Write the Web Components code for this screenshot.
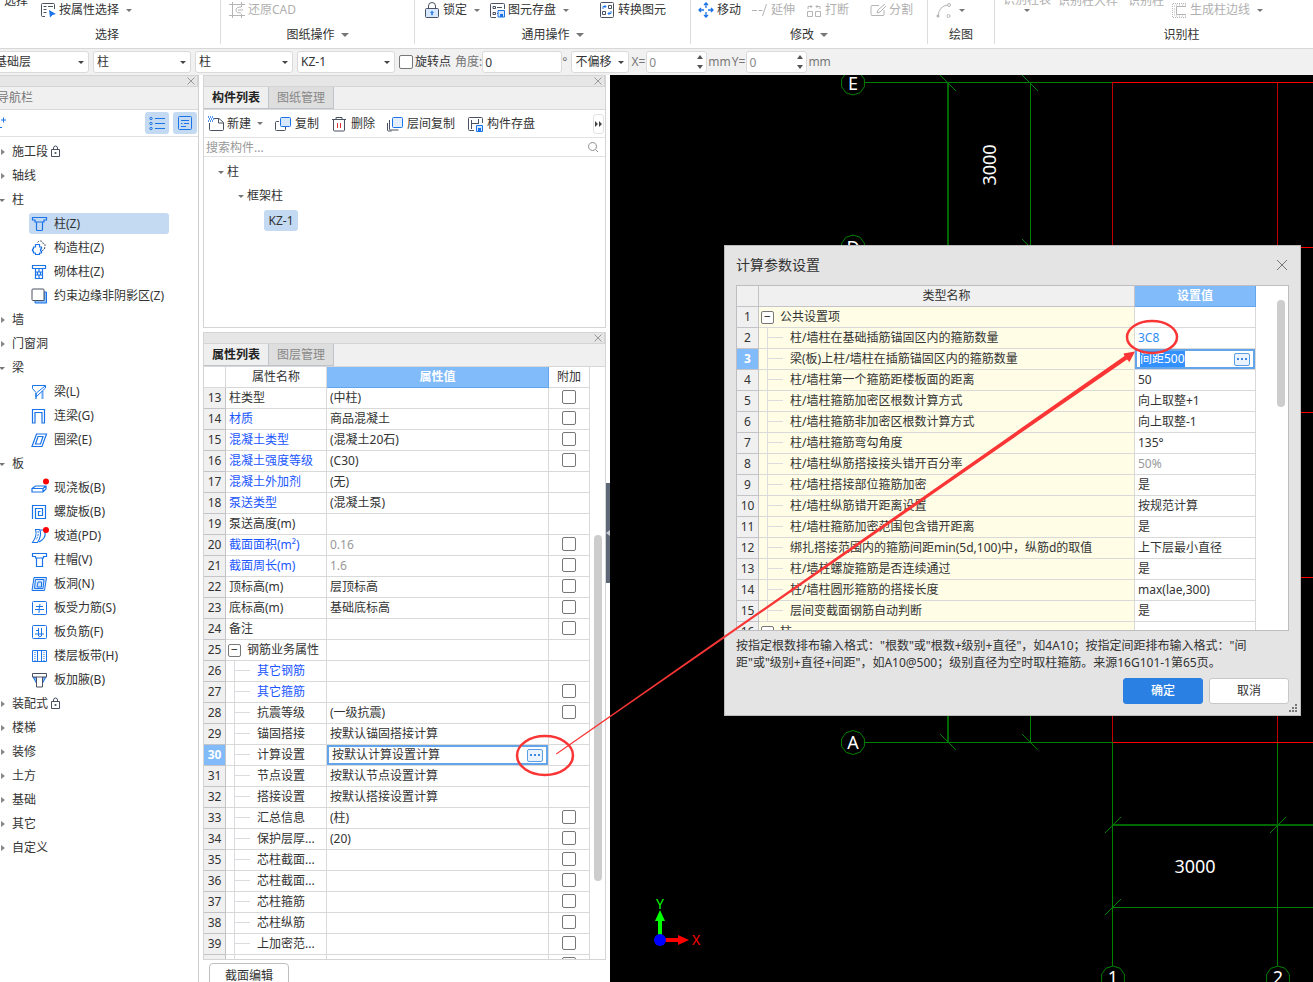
<!DOCTYPE html>
<html lang="zh-CN">
<head>
<meta charset="utf-8">
<title>计算参数设置</title>
<style>
html,body{margin:0;height:100%}
body{font:12px/16px "Noto Sans","Noto Sans CJK SC",sans-serif;color:#333;background:#fff;overflow:hidden}
</style>
</head>
<body>
<cad-app></cad-app>
<script>
const define=(name,render,after)=>customElements.define(name,class extends HTMLElement{
  connectedCallback(){
    if(this.shadowRoot)return;
    this.attachShadow({mode:'open'}).innerHTML='<style>*{box-sizing:border-box}button,input,select{font:inherit;color:inherit;margin:0}button{background:none;border:0;padding:0}</style>'+render(this);
    if(after)after(this);
  }
});

const B='#1a73e8',D='#4a5160',G='#b4b4b4';
const s=(c,d,x='')=>`<path d="${d}" fill="none" stroke="${c}" ${x}/>`;
const ICONS={
  select:s(D,'M5 14.500H2.500a1 1 0 0 1-1-1V2.500a1 1 0 0 1 1-1h11a1 1 0 0 1 1 1V7M3.500 4.500h3M8 4.500h5M3.500 7.500h3M3.500 10.500h3')+`<path d="M9 8l7 4-3.500 1L10 15.500z" fill="${B}"/>`,
  restore:s(G,'M3.500 0v16M12.500 12v4M0 2.500h16M0 13.500h16M12.500 0v5M12 5Q7 5 7 8t5 3M9 8h5'),
  lock:`<rect x="1.500" y="6.500" width="13" height="9" rx="1" fill="#d6e8ff" stroke="${D}"/>`+s(D,'M4.500 6V4a3.500 3.500 0 0 1 7 0v2')+`<path d="M8 9l1.500 1.500H8.500V13h-1v-2.500H6.500z" fill="${B}" stroke="${B}" stroke-width=".5"/>`,
  store:s(D,'M7 15.500H2.500a1 1 0 0 1-1-1V2.500a1 1 0 0 1 1-1h12a1 1 0 0 1 1 1V7M4 4.500h2.500v2H4zM4 10.500h2.500v2H4zM8 5.500h5M8 11.500h1')+`<path d="M9 8.500h6.500v6.500H9z" fill="#d6e8ff" stroke="${B}"/><path d="M11 12h3v3h-3z" fill="${B}"/>`,
  convert:s(D,'M2.500 .500h11a1 1 0 0 1 1 1v13a1 1 0 0 1-1 1h-11a1 1 0 0 1-1-1v-13a1 1 0 0 1 1-1zM9.500 3.500h3v3h-3zM3.500 9.500h3v3h-3z')+s(B,'M4 7V4.500h3M5.500 3L7 4.500 5.500 6M12 9v2.500H9M10.500 10L9 11.500l1.500 1.500'),
  move:s(B,'M8 1v5M8 10v5M1 8h5M10 8h5M6 3l2-2 2 2M6 13l2 2 2-2M3 6L1 8l2 2M13 6l2 2-2 2','stroke-width="1.300"'),
  extend:s(G,'M0 8.500h5M6.500 8.500h4M14.500 2l-4 12'),
  break:s(G,'M1.500 9.500h5v5h-5zM9.500 9.500h5v5h-5zM2 7V4.500h4M4.500 3L6 4.500 4.500 6M14 7V4.500h-4M11.500 3L10 4.500 11.500 6'),
  split:s(G,'M9 3.500H2a1 1 0 0 0-1 1v8a1 1 0 0 0 1 1h11a1 1 0 0 0 1-1V8M15 2L8 8l-1 3 3-1 6-6'),
  arc:s(G,'M2 14Q3 4 12 3')+`<circle cx="2" cy="14" r="1.500" fill="${G}"/><circle cx="13" cy="3" r="1.500" fill="none" stroke="${G}"/><circle cx="12.500" cy="14" r="1.500" fill="none" stroke="${G}"/>`,
  edge:s(G,'M15 1.500H1.500v14H15','stroke-dasharray="1 1"')+s(G,'M15 4.500H5.500v8H15')+s(G,'M15 3H3.500v11H15','stroke-dasharray="1 2"'),
  newdoc:s(D,'M6 2.500h5l4.500 4v7a1 1 0 0 1-1 1h-12a1 1 0 0 1-1-1V7M10.500 2.500V7h5')+s(B,'M0 1h5M1 3h5M0 5h5','stroke-dasharray="1 1" stroke-width="1.500"'),
  copy:s(D,'M4 5.500H1.500a1 1 0 0 0-1 1v7a1 1 0 0 0 1 1h8a1 1 0 0 0 1-1V11')+`<rect x="5.500" y="1.500" width="10" height="9" rx="1" fill="#d6e8ff" stroke="${B}"/>`,
  trash:s(D,'M1 3.500h14M5 3V1.500h6V3M2.500 4v10a1 1 0 0 0 1 1h9a1 1 0 0 0 1-1V4')+s('#e03030','M6.500 7v5M9.500 7v5'),
  layers:s(D,'M2.500 4v9a1 1 0 0 0 1 1h8M.500 7v7a1 1 0 0 0 1 1h3')+`<rect x="5.500" y="1.500" width="10" height="10" rx="1" fill="#e3efff" stroke="${B}"/>`,
  savecomp:s(D,'M7 14.500H2.500a1 1 0 0 1-1-1V2.500a1 1 0 0 1 1-1h12a1 1 0 0 1 1 1V7M4.500 4v9M4.500 7.500h7M11.500 3v5')+`<path d="M9.500 9.500h6v6h-6z" fill="#d6e8ff" stroke="${B}"/><path d="M11 12h3v3h-3z" fill="${B}"/>`,
  search:s('#8c8c8c','M7.500 3.500a4 4 0 1 0 .1 0zM10.500 10.500l2.500 2.500'),
  lockmini:s(D,'M1.500 5.500h8v7h-8zM3.500 5V4a2 2 0 0 1 4 0v1')+`<circle cx="5.500" cy="9" r="1.100" fill="${D}"/>`,
  list:[3,8,13].map(y=>`<circle cx="2" cy="${y+.5}" r="1.200" fill="none" stroke="${B}"/>`).join('')+s(B,'M6 3.500h10M6 8.500h10M6 13.500h10'),
  card:s(B,'M2.500 1.500h11a1 1 0 0 1 1 1v11a1 1 0 0 1-1 1h-11a1 1 0 0 1-1-1v-11a1 1 0 0 1 1-1zM4 5.500h8M4 8.500h1.500M7 8.500h5M4 11.500h5'),
  plus:s(B,'M1 5h5M3.500 2.500v5M0 12.500h2'),
  column:s(B,'M1.500 1.500h14v2.500h-2.500v2h-9v-2h-2.500zM5.500 6.500v7a1 1 0 0 0 1 1h4a1 1 0 0 0 1-1v-7','stroke-width="1.200"'),
  tie:s(D,'M6.500 2.500q1-1.500 3-1.500t2.500 2.500q2.500 0 2 2.500l-.5 3-2.500 2','stroke-dasharray="2 1"')+s(B,'M4.500 4.500h4v2.500h2v2h-1v2h1v2h-2v1.500h-4V13h-2v-2h-1V9h1V7h2z','stroke-width="1.200" stroke-linejoin="round"'),
  masonry:s(B,'M1.500 1.500h13v3h-13zM4.500 4.500v10h7v-10M4.500 8h7M4.500 11h7M8 5v3M6.500 8v3M9.500 8v3M8 11v3','stroke-width="1.200"'),
  shade:`<path d="M13 4h2.500v11H4v-2.500h9z" fill="#8dbdf5" stroke="${B}"/><rect x="1" y="1" width="12" height="11.500" rx="1" fill="#fff" stroke="${D}"/>`,
  beam:`<path d="M5 9v6M11.500 7v8" stroke="#6ca8f2" stroke-width="2"/>`+s(B,'M1.500 1.500h13v2.500L5 13V8.500L1.500 4.500zM14 2L6 8.500'),
  link:s(B,'M1.500 15V1.500h12V15h-2.500V4.500h-7V15z','stroke-width="1.200"'),
  ring:s(B,'M5.500 2h10l-4.500 12.500h-10zM7 4.500h5l-2.500 7.500h-5z','stroke-width="1.200"'),
  slab:s(B,'M1 8.500L4.500 6H15v3l-3 3H1zM1 8.500h11l3-2.500M12 8.500V12','stroke-width="1.200"')+'<circle cx="15" cy="1.500" r="3" fill="#f00"/>',
  spiral:s(B,'M1.500 15V1.500h13v13h-10v-10h7v7h-4v-4h2','stroke-width="1.200"'),
  ramp:s(B,'M4.500 1.500h4q3 5-2 13H1.500q5-7 3-13zM9 2h4q3 6-2 10l-3 2','stroke-width="1.100"')+s(B,'M7 3q1 4-2 9','stroke-dasharray="2 1"')+'<circle cx="15" cy="2" r="3" fill="#f00"/>',
  cap:s(B,'M1.500 1.500h14v3h-3v1.500h-8v-1.500h-3zM5.500 6v8.500h6V6','stroke-width="1.200"'),
  hole:`<path d="M3 1.500h12.500l-2 13H1z" fill="#d6e8ff" stroke="${B}"/>`+s(B,'M4.500 3.500h8.500l-1 9H3.500zM7 6h3.500v5H6z'),
  rebar:s(B,'M2.500 1.500h12a1 1 0 0 1 1 1v11a1 1 0 0 1-1 1h-12a1 1 0 0 1-1-1v-11a1 1 0 0 1 1-1zM5 6.500h7M4 9.500h9M9 4q-1 4-1 9'),
  neg:s(B,'M2.500 1.500h12a1 1 0 0 1 1 1v11a1 1 0 0 1-1 1h-12a1 1 0 0 1-1-1v-11a1 1 0 0 1 1-1zM5 6.500h3M4 10h9M7.500 4v8M10.500 4v8l-3 1'),
  strip:s(B,'M1.500 2.500h14v11h-14zM6.500 3v10M10.500 3v10')+s(B,'M4 4v9M13 4v9','stroke-dasharray="1 1"'),
  haunch:`<path d="M2 5h13l-4 7H6z" fill="#7fb4f5" stroke="${B}"/><path d="M1.500 1.500h14v3.500h-14zM5.500 5v10h6V5" fill="#fff" stroke="${D}"/>`,
};
define('ui-icon',e=>`<style>:host{display:block;flex:none;width:16px;height:16px}svg{display:block}</style><svg width="16" height="16" viewBox="0 0 16 16" overflow="visible" aria-hidden="true">${ICONS[e.getAttribute('name')]||''}</svg>`);

define('ui-caret',e=>`<style>:host{display:block;flex:none;width:0;height:0;border:3px solid transparent;border-top-color:currentColor;border-bottom:0;color:#777}
:host([right]){border:3px solid transparent;border-left:4px solid #888;border-right:0}
:host([big]){border-width:4px 4px 0}</style>`);

/* Ribbon */
define('ribbon-item',e=>`<style>:host{display:block;flex:none}:host([disabled]){color:#b0b0b0}:host([raised]){margin-top:-19px}:host([stack]){margin-top:-16px}
button{display:flex;align-items:center;gap:3px;height:20px;white-space:nowrap}ui-caret{margin-left:4px}
:host([stack]) button{flex-direction:column;gap:0;height:22px;line-height:18px}:host([stack]) ui-caret{margin:0}</style>
<button type="button">${e.getAttribute('icon')?`<ui-icon name="${e.getAttribute('icon')}"></ui-icon>`:''}<slot></slot>${e.hasAttribute('menu')?'<ui-caret></ui-caret>':''}</button>`);

define('ribbon-group',e=>`<style>:host{display:flex;flex-direction:column;flex:none;height:44px;border-right:1px solid #dcdcdc}
.row{display:flex;flex:none;align-items:center;height:20px;padding-left:var(--lead,8px);gap:var(--gap,10px)}
.cap{display:flex;flex:none;align-items:center;justify-content:center;gap:6px;height:30px;padding-right:var(--trail,0)}</style>
<div class="row"><slot></slot></div><div class="cap">${e.getAttribute('label')}${e.hasAttribute('menu')?'<ui-caret big></ui-caret>':''}</div>`);

define('ribbon-bar',()=>`<style>:host{display:flex;flex:none;height:49px;overflow:hidden;background:#fff;border-bottom:1px solid #d8d8d8}
.g1{width:221px;--lead:4px;--gap:12px;--trail:6px}.g2{width:194px;--lead:8px}.g3{width:276px;--lead:9px;--gap:9px}.g4{width:237px;--lead:7px;--gap:11px}.g5{width:67px;--lead:8px}.g6{width:374px;--lead:8px;--gap:7px}
.wide{margin-left:21px}.gap{margin-left:10px}.near{margin-left:3px}</style>
<ribbon-group class="g1" label="选择"><ribbon-item raised>选择</ribbon-item><ribbon-item icon="select" menu>按属性选择</ribbon-item></ribbon-group>
<ribbon-group class="g2" label="图纸操作" menu><ribbon-item icon="restore" disabled>还原CAD</ribbon-item></ribbon-group>
<ribbon-group class="g3" label="通用操作" menu><ribbon-item icon="lock" menu>锁定</ribbon-item><ribbon-item icon="store" menu>图元存盘</ribbon-item><ribbon-item icon="convert" class="wide">转换图元</ribbon-item></ribbon-group>
<ribbon-group class="g4" label="修改" menu><ribbon-item icon="move">移动</ribbon-item><ribbon-item icon="extend" disabled>延伸</ribbon-item><ribbon-item icon="break" disabled>打断</ribbon-item><ribbon-item icon="split" disabled class="gap">分割</ribbon-item></ribbon-group>
<ribbon-group class="g5" label="绘图"><ribbon-item icon="arc" menu disabled></ribbon-item></ribbon-group>
<ribbon-group class="g6" label="识别柱"><ribbon-item stack menu disabled>识别柱表</ribbon-item><ribbon-item raised disabled>识别柱大样</ribbon-item><ribbon-item raised disabled class="near">识别柱</ribbon-item><ribbon-item icon="edge" menu disabled>生成柱边线</ribbon-item></ribbon-group>`);

/* Option bar */
define('drop-down',e=>`<style>:host{display:block;position:relative;flex:none;width:98px;height:22px}
select{appearance:none;width:100%;height:22px;border:1px solid #dadada;border-radius:3px;background:#fff;padding:0 3px;outline:0}
ui-caret{position:absolute;right:5px;top:10px;color:#444;pointer-events:none}</style>
<select aria-label="${e.getAttribute('label')}"><option>${e.getAttribute('value')}</option></select><ui-caret></ui-caret>`);
define('num-box',e=>`<style>:host{display:block;position:relative;flex:none;width:61px;height:22px;color:#888}
input{width:100%;height:22px;border:1px solid #dadada;border-radius:3px;background:#fff;padding:0 2px;outline:0}
svg{position:absolute;right:4px;top:4px}:host([plain]){width:80px;color:#333}:host([plain]) svg{display:none}</style>
<input type="text" aria-label="${e.getAttribute('label')}" value="0"><svg width="6" height="14" fill="#555"><path d="M3 0l3 4H0zM3 14l3-4H0z"/></svg>`);
define('option-bar',()=>`<style>:host{display:flex;flex:none;align-items:center;height:26px;background:#f1f1f1;overflow:hidden;color:#777}
.bar,.set{display:flex;align-items:center;gap:4px}.bar{margin-left:-9px}drop-down{color:#333}.off{width:58px}
label{display:flex;align-items:center;gap:2px;color:#333}input{appearance:none;width:14px;height:14px;border:1px solid #777;border-radius:2px;background:#fff}
.f{gap:0}.tail{gap:1px;margin-left:-2px}</style>
<div class="bar"><drop-down label="楼层" value="基础层"></drop-down><drop-down label="类别" value="柱"></drop-down><drop-down label="类型" value="柱"></drop-down><drop-down label="构件" value="KZ-1"></drop-down>
<label><input type="checkbox">旋转点</label><div class="set f"><span>角度:</span><num-box plain label="角度"></num-box><span>°</span></div>
<drop-down class="off" label="偏移" value="不偏移"></drop-down><div class="set tail"><span>X=</span><num-box label="X"></num-box><span>mm</span><span>Y=</span><num-box label="Y"></num-box><span>mm</span></div></div>`);

/* Dock panel */
define('dock-head',e=>{const t=(e.getAttribute('tabs')||'').split(',').filter(Boolean);return `<style>:host{display:block;flex:none}
.t{display:flex;justify-content:flex-end;align-items:center;height:12px;background:#e6e6e6;border:1px solid #d4d4d4;border-left:0;padding-right:2px}
.t button{display:block;height:8px}svg{display:block}
.h{display:flex;height:23px;background:#f0f0f0;border-bottom:1px solid #d8d8d8;align-items:stretch}
.h button{width:65px;padding-top:1px;border-right:1px solid #bfc3ca;border-bottom:1px solid #bfc3ca;background:#dedede;color:#888}
.h button:first-child{font-weight:600;color:#222;background:#efefef}
.h span{line-height:22px;color:#777;margin-left:-3px}</style>
<div class="t"><button type="button" aria-label="关闭"><svg width="8" height="8"><path d="M.500 .500l7 7M7.500 .500l-7 7" stroke="#999"/></svg></button></div>
<div class="h">${t.length?t.map(x=>`<button type="button">${x}</button>`).join(''):`<span>${e.getAttribute('heading')}</span>`}</div>`});

const NAV=[['施工段',0,'lockmini'],['轴线'],['柱',1],['-柱(Z)','column'],['-构造柱(Z)','tie'],['-砌体柱(Z)','masonry'],['-约束边缘非阴影区(Z)','shade'],['墙'],['门窗洞'],['梁',1],['-梁(L)','beam'],['-连梁(G)','link'],['-圈梁(E)','ring'],['板',1],['-现浇板(B)','slab'],['-螺旋板(B)','spiral'],['-坡道(PD)','ramp'],['-柱帽(V)','cap'],['-板洞(N)','hole'],['-板受力筋(S)','rebar'],['-板负筋(F)','neg'],['-楼层板带(H)','strip'],['-板加腋(B)','haunch'],['装配式',0,'lockmini'],['楼梯'],['装修'],['土方'],['基础'],['其它'],['自定义']];
define('nav-panel',()=>`<style>:host{display:flex;flex-direction:column;flex:none;width:199px;border-right:1px solid #d0d0d0;background:#fff;overflow:hidden}
.tools{display:flex;flex:none;align-items:center;gap:4px;height:27px;border-bottom:1px solid #e0e0e0;padding-right:1px}
.tools>ui-icon{margin-right:auto}
.tools button{display:grid;place-items:center;width:24px;height:22px;border-radius:3px;background:#c3daf2}
ul{display:flex;flex-direction:column;list-style:none;margin:0;padding:3px 0 0}li{display:flex;flex:none;align-items:center;height:24px}
.top ui-caret{margin:0 7px 0 1px}.top.open ui-caret{margin:0 7px 0 -1px}.top ui-icon{margin-left:2px}
.sub{width:140px;height:21px;margin:1px 0 2px 29px;padding-left:2px;gap:7px;border-radius:3px;white-space:nowrap}.on{background:#c3daf2}</style>
<dock-head heading="导航栏"></dock-head><div class="tools"><ui-icon name="plus"></ui-icon><button type="button" aria-label="列表"><ui-icon name="list"></ui-icon></button><button type="button" aria-label="详情"><ui-icon name="card"></ui-icon></button></div>
<ul>${NAV.map(([t,a,b],i)=>t[0]=='-'?`<li class="sub${i==3?' on':''}"><ui-icon name="${a}"></ui-icon><span>${t.slice(1)}</span></li>`:`<li class="top${a?' open':''}"><ui-caret ${a?'':'right'}></ui-caret><span>${t}</span>${b?`<ui-icon name="${b}"></ui-icon>`:''}</li>`).join('')}</ul>`);

define('component-panel',()=>`<style>:host{display:flex;flex-direction:column;flex:none;height:253px;border:1px solid #d4d4d4;border-top:0;background:#fff}
.tools{display:flex;flex:none;align-items:center;gap:12px;height:28px;padding:0 1px 0 4px;border-bottom:1px solid #e2e2e2}
.tools button{display:flex;align-items:center;gap:4px;white-space:nowrap}.tools .n{gap:3px}.n ui-caret{margin-left:3px}.tools .more{margin-left:auto;width:11px;height:20px;border:1px solid #e2e2e2;border-radius:3px;justify-content:center}
.more svg{flex:none}
.find{display:flex;align-items:center;height:19px;border-bottom:1px solid #e2e2e2;padding:0 4px 0 2px}.find input{flex:1;border:0;padding:0;outline:0;height:18px;background:none}::placeholder{color:#999;opacity:1}
ul{list-style:none;margin:0;padding:3px 0 0}li{display:flex;align-items:center;gap:3px;height:24px}
.a{padding-left:14px}.b{padding-left:34px}.c{padding-left:60px}.c span{background:#c3daf2;border-radius:3px;line-height:21px;width:34px;text-align:center}</style>
<dock-head tabs="构件列表,图纸管理"></dock-head>
<div class="tools"><button type="button" class="n"><ui-icon name="newdoc"></ui-icon>新建<ui-caret></ui-caret></button><button type="button"><ui-icon name="copy"></ui-icon>复制</button><button type="button"><ui-icon name="trash"></ui-icon>删除</button><button type="button"><ui-icon name="layers"></ui-icon>层间复制</button><button type="button"><ui-icon name="savecomp"></ui-icon>构件存盘</button><button type="button" class="more" aria-label="更多"><svg width="7" height="6" fill="#444"><path d="M0 0l3 3-3 3zM4 0l3 3-3 3z"/></svg></button></div>
<div class="find"><input type="search" placeholder="搜索构件..." aria-label="搜索构件"><ui-icon name="search"></ui-icon></div>
<ul><li class="a"><ui-caret></ui-caret>柱</li><li class="b"><ui-caret></ui-caret>框架柱</li><li class="c"><span>KZ-1</span></li></ul>`);

/* Grid styles shared by both property tables */
const GRID=`table{border-collapse:separate;border-spacing:0;table-layout:fixed}
th,td{height:21px;padding:0 3px;border-right:1px solid #d9d9d9;border-bottom:1px solid #d9d9d9;line-height:20px;white-space:nowrap;overflow:hidden;text-align:left;font-weight:400}
tbody th{background:#f0f0f0;border-color:#c4c4c8;text-align:center;padding:0}
thead th{text-align:center}thead .v{background:#82bbfa;color:#fff;font-weight:600;border-color:#62a5ea}
tr.on th{background:#82bbfa;color:#fff;font-weight:700}
.in,.grp{position:relative}
.in::before{content:"";position:absolute;left:8px;top:0;bottom:0;border-left:1px solid #dcdce0}.in::after{content:"";position:absolute;left:8px;top:9px;width:16px;border-top:1px solid #dcdce0}
.grp .w{display:flex;align-items:center;height:20px}.box{display:block;width:13px;height:13px;border:1px solid #777;border-radius:2px;background:#fff;line-height:10px;text-align:center}
.edit{padding:0}.edit div{display:flex;align-items:center;height:20px;border:2px solid #62a5ea;background:#fff}.edit input{border:0;padding:0;outline:0;background:none;height:16px}
.edit button{flex:none;display:grid;place-items:center;width:16px;height:13px;margin-left:auto;border:1px solid #5a9fe6;border-radius:2px;background:#eaf3fe}
.thumb{position:absolute;border-radius:4px;background:#cdcdcd;width:8px}`;
const DOTS='<button type="button" aria-label="更多选项"><svg width="10" height="2" fill="#3f8ae0"><path d="M0 0h2v2H0zM4 0h2v2H4zM8 0h2v2H8z"/></svg></button>';
const PROPS=[['柱类型','(中柱)',1],['*材质','商品混凝土',1],['*混凝土类型','(混凝土20石)',1],['*混凝土强度等级','(C30)',1],['*混凝土外加剂','(无)',0],['*泵送类型','(混凝土泵)',0],['泵送高度(m)','',0],['*截面面积(m²)','~0.16',1],['*截面周长(m)','~1.6',1],['顶标高(m)','层顶标高',1],['底标高(m)','基础底标高',1],['备注','',1],['+钢筋业务属性','',0],['*其它钢筋','',0],['*其它箍筋','',1],['抗震等级','(一级抗震)',1],['锚固搭接','按默认锚固搭接计算',0],['计算设置','按默认计算设置计算',0],['节点设置','按默认节点设置计算',0],['搭接设置','按默认搭接设置计算',0],['汇总信息','(柱)',1],['保护层厚...','(20)',1],['芯柱截面...','',1],['芯柱截面...','',1],['芯柱箍筋','',1],['芯柱纵筋','',1],['上加密范...','',1],['','',1]];
define('property-panel',()=>`<style>${GRID}
:host{display:flex;flex-direction:column;flex:1;min-height:0;background:#fff}
.frame{border:1px solid #d4d4d4;border-top:0;display:flex;flex-direction:column;flex:1;min-height:0}
.scroll{position:relative;flex:1;min-height:0;overflow:hidden}table{width:386px}
.blue{color:#1a56ff}.dim{color:#999}td.in{padding-left:31px}td.c{padding:0}td.c input{display:block;appearance:none;width:14px;height:14px;border:1px solid #777;border-radius:2px;margin:0 auto 2px;background:#fff}
thead th{height:21px;padding:0}.grp .box{margin-right:6px;margin-left:-1px}.edit input{width:160px;margin-left:3px}.edit button{margin-right:3px}
.thumb{right:3px;top:168px;height:346px}
.foot{flex:none;height:22px;overflow:hidden;padding:3px 0 0 6px}.foot button{width:80px;height:25px;border:1px solid #bfbfbf;border-radius:4px;background:#fff}</style>
<div class="frame"><dock-head tabs="属性列表,图层管理"></dock-head><div class="scroll"><table><colgroup><col style="width:22px"><col style="width:101px"><col style="width:222px"><col style="width:41px"></colgroup>
<thead><tr><th></th><th>属性名称</th><th class="v">属性值</th><th>附加</th></tr></thead><tbody>${PROPS.map(([n,v,c],i)=>{
 const id=i+13,blue=n[0]=='*',grp=n[0]=='+',t=n.replace(/^[*+]/,'');
 return `<tr class="${id==30?'on':''}"><th>${id}</th><td class="${blue?'blue ':''}${grp?'grp':id>25?'in':''}">${grp?`<div class="w"><span class="box">−</span>${t}</div>`:t}</td>${id==30?`<td class="edit"><div><input type="text" aria-label="计算设置" value="${v}">${DOTS}</div></td>`:`<td class="${v[0]=='~'?'dim':''}">${v.replace('~','')}</td>`}<td class="c">${c?`<input type="checkbox" aria-label="附加 ${t}">`:''}</td></tr>`}).join('')}</tbody></table><div class="thumb"></div></div></div>
<div class="foot"><button type="button">截面编辑</button></div>`);

define('side-splitter',()=>`<style>:host{display:flex;align-items:center;flex:none;width:4px;background:#fff;padding-top:8px}div{display:flex;align-items:center;width:4px;height:100px;background:#5f6878}</style><div><svg width="4" height="6"><path d="M4 0v6L0 3z" fill="#c8ccd2"/></svg></div>`);

/* Drawing canvas */
const ring=(x,y)=>{let p='';for(let i=0;i<10;i++){const a=i*Math.PI/5-Math.PI/2;p+=`${(x+12*Math.cos(a)).toFixed(1)},${(y+12*Math.sin(a)).toFixed(1)} `}return `<polygon points="${p}"/>`};
define('cad-canvas',()=>`<style>:host{display:block;position:relative;flex:1;min-width:0;overflow:hidden;background:#000}svg{position:absolute;left:0;top:0}
text{font-family:"Noto Sans",sans-serif;font-size:18px;text-anchor:middle}</style>
<svg width="1400" height="1200" viewBox="610 75 1400 1200">
<g fill="none" stroke="#008000" stroke-width="1">${ring(853,83)}${ring(853,247)}${ring(853,742.5)}${ring(1113,978)}${ring(1278,978)}
<path d="M865 82.500h248M865 247.500h248M865 742.500h248M1030.500 82v660M1112.500 742v224M1277.500 742v224M1112 907.500h888"/>
<path stroke="#006800" stroke-width="2" d="M948 82v660M1112 825h888"/>
<path d="M940 75l16 16M1022 75l16 16M1022 239l16 16M940 734l16 16M1022 734l16 16M1105 833l16-16M1270 833l16-16M1105 915l16-16"/></g>
<path fill="none" stroke="#c00000" d="M1112.500 82v660M1277.500 82v660"/><path fill="none" stroke="#f00" d="M1113 82.500h900M1113 247.500h900M1113 412.500h900M1113 577.500h900M1113 742.500h900"/>
<g fill="#fff"><text x="853" y="90">E</text><text x="853" y="254">D</text><text x="853" y="749">A</text><text x="1113" y="984">1</text><text x="1278" y="984">2</text><text x="1195" y="873">3000</text><text transform="translate(996 165) rotate(-90)">3000</text></g>
<path d="M658 935v-14h-3l5-11 5 11h-3v14z" fill="#0f0"/><path d="M665 938h13v-3l11 5-11 5v-3h-13z" fill="#f00"/><circle cx="660" cy="940" r="6" fill="#00f"/>
<text x="660" y="909" fill="#0f0" style="font-size:14px">Y</text><text x="696" y="945" fill="#f00" style="font-size:14px">X</text></svg><slot></slot>`);

const PARAMS=[['+公共设置项',''],['柱/墙柱在基础插筋锚固区内的箍筋数量','3C8'],['梁(板)上柱/墙柱在插筋锚固区内的箍筋数量','间距500'],['柱/墙柱第一个箍筋距楼板面的距离','50'],['柱/墙柱箍筋加密区根数计算方式','向上取整+1'],['柱/墙柱箍筋非加密区根数计算方式','向上取整-1'],['柱/墙柱箍筋弯勾角度','135°'],['柱/墙柱纵筋搭接接头错开百分率','50%'],['柱/墙柱搭接部位箍筋加密','是'],['柱/墙柱纵筋错开距离设置','按规范计算'],['柱/墙柱箍筋加密范围包含错开距离','是'],['绑扎搭接范围内的箍筋间距min(5d,100)中，纵筋d的取值','上下层最小直径'],['柱/墙柱螺旋箍筋是否连续通过','是'],['柱/墙柱圆形箍筋的搭接长度','max(lae,300)'],['层间变截面钢筋自动判断','是'],['+柱','']];
define('param-dialog',()=>`<style>${GRID}
:host{display:flex;flex-direction:column;position:absolute;left:114px;top:170px;width:577px;padding:0 11px 11px;border:1px solid #bcbcbc;background:#e4e4e4}
header{display:flex;align-items:center;justify-content:space-between;height:39px;padding-bottom:2px;font-size:14px}header button{padding-right:1px}header svg{display:block}h2{font:inherit;margin:0}
.scroll{position:relative;height:346px;overflow:hidden;border:1px solid #bdbdc2;background:#fff}table{width:519px}
thead th{height:20px;background:#f0f0f0;border-color:#c4c4c8}thead th:first-child{padding:0}
.n{background:#fffde6}td.in{padding-left:31px}.grp .box{margin-right:6px;margin-left:-1px}
.edit input{width:45px;margin-left:3px;background:#3390ff;color:#fff}.edit button{margin-right:3px}
.thumb{right:3px;top:14px;height:107px}
p{margin:6px 0 7px;padding-right:34px;line-height:17px}
.act{display:flex;justify-content:flex-end;gap:6px}.act button{width:80px;height:26px;border-radius:3px;background:#fff;border:1px solid #c8c8c8}.act .ok{background:#2b80e3;border-color:#2b80e3;color:#fff;font-weight:500}
.grip{position:absolute;right:3px;bottom:3px}</style>
<header><h2>计算参数设置</h2><button type="button" aria-label="关闭"><svg width="12" height="12"><path d="M1 1l10 10M11 1L1 11" stroke="#777"/></svg></button></header>
<div class="scroll"><table><colgroup><col style="width:22px"><col style="width:376px"><col style="width:121px"></colgroup><thead><tr><th></th><th>类型名称</th><th class="v">设置值</th></tr></thead>
<tbody>${PARAMS.map(([n,v],i)=>{const g=n[0]=='+';return `<tr class="${i==2?'on':''}"><th>${i+1}</th><td class="n ${g?'grp':'in'}">${g?`<div class="w"><span class="box">−</span>${n.slice(1)}</div>`:n}</td>${i==2?`<td class="edit"><div><input type="text" aria-label="箍筋数量" value="${v}">${DOTS}</div></td>`:`<td${i==1?' style="color:#2f8cf0"':i==7?' style="color:#999"':''}>${v}</td>`}</tr>`}).join('')}</tbody></table><div class="thumb"></div></div>
<p>按指定根数排布输入格式："根数"或"根数+级别+直径"，如4A10；按指定间距排布输入格式："间距"或"级别+直径+间距"，如A10@500；级别直径为空时取柱箍筋。来源16G101-1第65页。</p>
<div class="act"><button type="button" class="ok">确定</button><button type="button">取消</button></div>
<svg class="grip" width="8" height="8" fill="#777"><path d="M6 0h2v2H6zM3 3h2v2H3zM6 3h2v2H6zM0 6h2v2H0zM3 6h2v2H3zM6 6h2v2H6z"/></svg>`);

/* Red annotation marks over the whole window */
define('mark-layer',()=>`<style>:host{position:absolute;left:0;top:0;pointer-events:none}svg{display:block}</style>
<svg width="1313" height="982"><g fill="none" stroke="#f93535"><ellipse cx="545" cy="755.500" rx="28" ry="19.500" stroke-width="2.500"/><ellipse cx="1152" cy="337" rx="25" ry="16" stroke-width="2.500"/></g>
<path d="M556 753.500L1124.500 356 1123.500 353.500 1135 351.500 1129.500 362 1127 359.500 556.500 754.500z" fill="#f93535"/></svg>`);

define('cad-app',()=>`<style>:host{display:flex;flex-direction:column;position:relative;height:100vh;overflow:hidden}
main{display:flex;flex:1;min-height:0}.mid{display:flex;flex-direction:column;flex:none;width:403px;margin-left:4px;gap:4px}</style>
<ribbon-bar></ribbon-bar><option-bar></option-bar>
<main><nav-panel></nav-panel><div class="mid"><component-panel></component-panel><property-panel></property-panel></div><side-splitter></side-splitter><cad-canvas><param-dialog></param-dialog></cad-canvas></main><mark-layer></mark-layer>`);
</script>
</body>
</html>
